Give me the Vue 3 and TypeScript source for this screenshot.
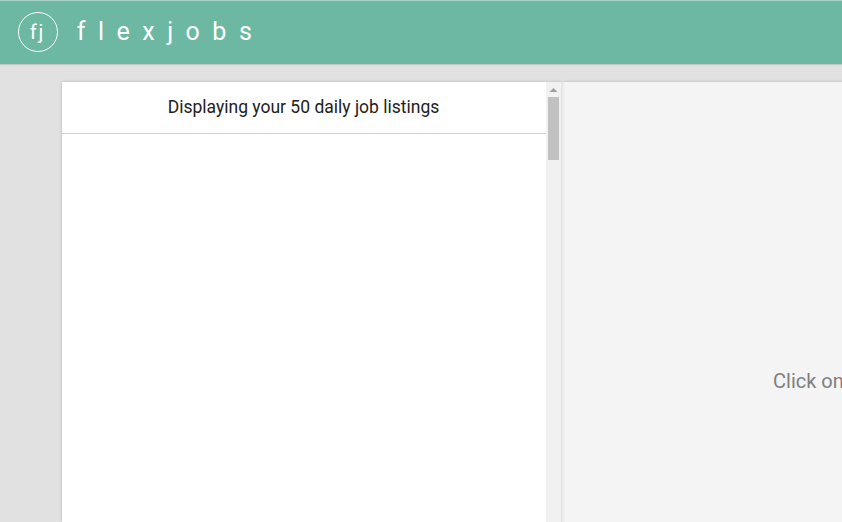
<script setup lang="ts">
const count: number = 50
</script>

<template>
  <div class="page">
    <header class="bar">
      <div class="logo">fj</div>
      <h1 class="name">flexjobs</h1>
    </header>
    <main class="board">
      <section class="list">
        <div class="listings"><h2 class="heading">Displaying your {{ count }} daily job listings</h2></div>
        <div class="track">
          <svg class="arrow" width="15" height="15" viewBox="0 0 15 15"><path d="M3.5 10 7.5 6 11.5 10Z" fill="#a0a0a0" /></svg>
          <div class="thumb"></div>
        </div>
      </section>
      <section class="detail"><p class="hint">Click on</p></section>
    </main>
  </div>
</template>

<style>
body { overflow: hidden; }
</style>
<style scoped>
.page { width: 842px; height: 522px; overflow: hidden; display: flex; flex-direction: column; background: #e1e1e1; font-family: Roboto, sans-serif; }
.bar { flex: none; box-sizing: border-box; height: 64px; padding: 0 18px 2px; border-top: 1px solid #a8d3c6; display: flex; align-items: center; gap: 19px; background: #6cb8a3; color: #fff; box-shadow: 0 1px 1px rgba(0,0,0,.12); }
.logo { box-sizing: border-box; width: 40px; height: 40px; border: 1px solid #fff; border-radius: 50%; font-size: 20px; line-height: 38px; letter-spacing: 2px; text-align: center; text-indent: -1px; }
.name { margin: 0 0 1px -0.3px; font-size: 25px; font-weight: 400; line-height: 29px; letter-spacing: 12.5px; }
.board { flex: 1; min-height: 0; padding: 18px 0 0 62px; display: flex; }
.list { flex: none; width: 499px; display: flex; background: #fff; box-shadow: 0 0 3px rgba(0,0,0,.2); }
.listings { flex: 1; }
.heading { box-sizing: border-box; height: 52px; margin: 0; padding-right: 1px; border-bottom: 1px solid #d0d0d0; font-size: 17.5px; font-weight: 400; line-height: 50px; text-align: center; color: #212121; }
.track { width: 15px; background: #f1f1f1; display: flex; flex-direction: column; align-items: center; }
.arrow { display: block; }
.thumb { width: 11px; height: 63px; background: #c1c1c1; }
.detail { flex: 1; min-width: 0; background: linear-gradient(90deg, #e2e2e2, #f4f4f4 4px); box-shadow: 3px 0 3px rgba(0,0,0,.2); overflow: hidden; }
.hint { margin: 287px 0 0 212px; font-size: 20px; line-height: 24px; white-space: nowrap; color: #808080; }
</style>
